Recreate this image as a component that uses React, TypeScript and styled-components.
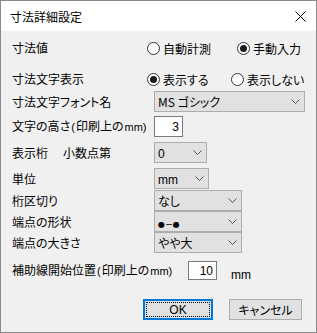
import React from "react";
import styled, { createGlobalStyle } from "styled-components";

const Global = createGlobalStyle`
  html, body { margin: 0; padding: 0; background: #ffffff; }
  * { box-sizing: border-box; }
  body {
    font-family: "Noto Sans CJK JP", "Noto Sans", sans-serif;
    font-size: 12px;
    color: #000;
  }
`;

const Window = styled.div`
  width: 317px;
  height: 333px;
  border: 1px solid #8a8a8a;
  background: #f0f0f0;
  display: flex;
  flex-direction: column;
`;

const TitleBar = styled.div`
  height: 30px;
  background: #ffffff;
  display: flex;
  align-items: center;
  justify-content: space-between;
  padding: 0 9px 0 9px;
  font-size: 12px;
  font-feature-settings: "palt";
`;

const CloseIcon = styled.svg`
  width: 11px;
  height: 11px;
  margin-right: 1px;
`;

const Body = styled.div`
  display: flex;
  flex-direction: column;
  padding-left: 11px;
`;

const Row = styled.div<{ $mt: number; $h: number }>`
  display: grid;
  grid-template-columns: 142px 1fr;
  align-items: center;
  margin-top: ${(p) => p.$mt}px;
  height: ${(p) => p.$h}px;
`;

const Label = styled.span`
  white-space: nowrap;
  font-feature-settings: "palt";
  line-height: 1;
`;

const Latin = styled.span`
  font-family: "Liberation Sans", Arial, sans-serif;
  font-size: 11px;
  margin: 0 1px;
`;

const SubLabel = styled.span`
  margin-left: 15px;
`;

const RadioGroup = styled.div`
  display: flex;
  align-items: center;
  margin-left: -7px;
`;

const RadioItem = styled.label<{ $w?: number }>`
  display: flex;
  align-items: center;
  gap: 3px;
  width: ${(p) => (p.$w ? `${p.$w}px` : "auto")};
  white-space: nowrap;
  font-feature-settings: "palt";
`;

const Circle = styled.span<{ $on?: boolean }>`
  width: 13px;
  height: 13px;
  border-radius: 50%;
  border: 1px solid #333;
  background: #fff;
  display: flex;
  align-items: center;
  justify-content: center;
  &::after {
    content: "";
    width: 7px;
    height: 7px;
    border-radius: 50%;
    background: ${(p) => (p.$on ? "#1a1a1a" : "transparent")};
  }
`;

const Select = styled.div<{ $w: number }>`
  width: ${(p) => p.$w}px;
  height: 21px;
  background: #e1e1e1;
  border: 1px solid #adadad;
  display: flex;
  align-items: center;
  justify-content: space-between;
  padding: 0 4px 0 3px;
  font-feature-settings: "palt";
  white-space: nowrap;
`;

const Chevron = styled.svg`
  width: 9px;
  height: 5px;
  flex: none;
`;

const TextBox = styled.div<{ $w: number; $h: number }>`
  width: ${(p) => p.$w}px;
  height: ${(p) => p.$h}px;
  background: #fff;
  border: 1px solid #7a7a7a;
  display: flex;
  align-items: center;
  justify-content: flex-end;
  padding-right: 3px;
  font-family: "Liberation Sans", Arial, sans-serif;
  font-size: 12px;
`;

const Mono = styled.span`
  font-family: "Liberation Sans", Arial, sans-serif;
  font-size: 12px;
`;

const Dot = styled.span`
  font-size: 8px;
  font-family: "DejaVu Sans", sans-serif;
`;

const Dash = styled.span`
  font-size: 10px;
  font-family: "Liberation Sans", Arial, sans-serif;
  letter-spacing: -0.5px;
  margin: 0 1px;
`;

const AuxRow = styled.div`
  display: flex;
  align-items: center;
  margin-top: 8px;
  height: 19px;
`;

const AuxLabel = styled(Label)`
  width: 176px;
`;

const Unit = styled.span`
  font-family: "Liberation Sans", Arial, sans-serif;
  font-size: 12px;
  margin-left: 14px;
  align-self: flex-end;
  margin-bottom: -2px;
`;

const ButtonRow = styled.div`
  display: flex;
  justify-content: flex-end;
  gap: 16px;
  margin-top: 19px;
  padding-right: 14px;
`;

const Button = styled.div<{ $w: number; $primary?: boolean }>`
  width: ${(p) => p.$w}px;
  height: 21px;
  background: #e1e1e1;
  border: ${(p) => (p.$primary ? "2px solid #0078d7" : "1px solid #adadad")};
  display: flex;
  align-items: center;
  justify-content: center;
  position: relative;
  font-feature-settings: "palt";
  ${(p) => (p.$primary ? "font-family: 'Liberation Sans', Arial, sans-serif;" : "")}
  &::after {
    content: "";
    position: absolute;
    inset: 1px;
    border: 1px dotted ${(p) => (p.$primary ? "#000" : "transparent")};
  }
`;

const ChevronIcon = () => (
  <Chevron viewBox="0 0 9 5">
    <polyline points="0.5,0.5 4.5,4.5 8.5,0.5" fill="none" stroke="#555" strokeWidth="1" />
  </Chevron>
);

const Dropdown: React.FC<{ w: number; children: React.ReactNode }> = ({ w, children }) => (
  <Select $w={w}>
    <span>{children}</span>
    <ChevronIcon />
  </Select>
);

const Radio: React.FC<{ on?: boolean; w?: number; children: React.ReactNode }> = ({ on, w, children }) => (
  <RadioItem $w={w}>
    <Circle $on={on} />
    <span>{children}</span>
  </RadioItem>
);

export default function App() {
  return (
    <>
      <Global />
      <Window>
        <TitleBar>
          <span>寸法詳細設定</span>
          <CloseIcon viewBox="0 0 11 11">
            <path d="M0.5 0.5 L10.5 10.5 M10.5 0.5 L0.5 10.5" stroke="#000" strokeWidth="1" fill="none" />
          </CloseIcon>
        </TitleBar>
        <Body>
          <Row $mt={5} $h={24}>
            <Label>寸法値</Label>
            <RadioGroup>
              <Radio w={90}>自動計測</Radio>
              <Radio on>手動入力</Radio>
            </RadioGroup>
          </Row>
          <Row $mt={8} $h={22}>
            <Label>寸法文字表示</Label>
            <RadioGroup>
              <Radio on w={84}>表示する</Radio>
              <Radio>表示しない</Radio>
            </RadioGroup>
          </Row>
          <Row $mt={1} $h={21}>
            <Label>寸法文字フォント名</Label>
            <Dropdown w={151}>MS ゴシック</Dropdown>
          </Row>
          <Row $mt={4} $h={21}>
            <Label>
              文字の高さ<Latin>(</Latin>印刷上の<Latin>mm)</Latin>
            </Label>
            <TextBox $w={29} $h={21}>3</TextBox>
          </Row>
          <Row $mt={5} $h={21}>
            <Label>
              表示桁<SubLabel>小数点第</SubLabel>
            </Label>
            <Dropdown w={53}><Mono>0</Mono></Dropdown>
          </Row>
          <Row $mt={5} $h={21}>
            <Label>単位</Label>
            <Dropdown w={55}><Mono>mm</Mono></Dropdown>
          </Row>
          <Row $mt={1} $h={21}>
            <Label>桁区切り</Label>
            <Dropdown w={88}>なし</Dropdown>
          </Row>
          <Row $mt={0} $h={21}>
            <Label>端点の形状</Label>
            <Dropdown w={88}>
              <Dot>●</Dot>
              <Dash>--</Dash>
              <Dot>●</Dot>
            </Dropdown>
          </Row>
          <Row $mt={0} $h={21}>
            <Label>端点の大きさ</Label>
            <Dropdown w={88}>やや大</Dropdown>
          </Row>
          <AuxRow>
            <AuxLabel>
              補助線開始位置<Latin>(</Latin>印刷上の<Latin>mm)</Latin>
            </AuxLabel>
            <TextBox $w={29} $h={19}>10</TextBox>
            <Unit>mm</Unit>
          </AuxRow>
          <ButtonRow>
            <Button $w={70} $primary>OK</Button>
            <Button $w={73}>キャンセル</Button>
          </ButtonRow>
        </Body>
      </Window>
    </>
  );
}
